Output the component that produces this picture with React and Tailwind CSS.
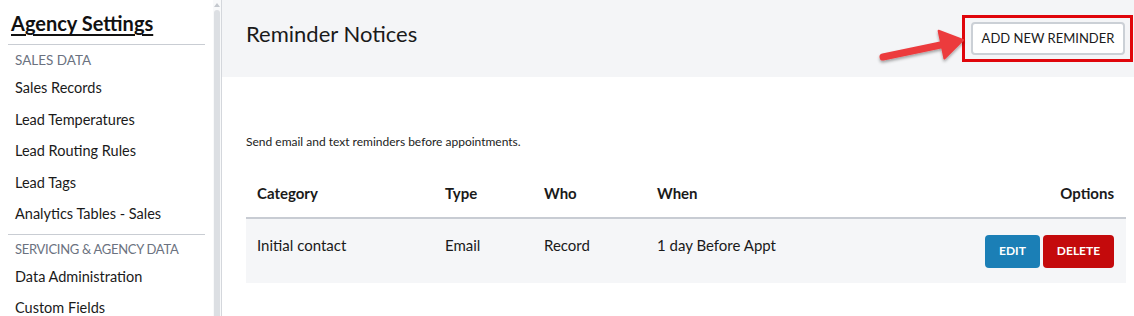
import React from 'react';

const salesItems = ['Sales Records', 'Lead Temperatures', 'Lead Routing Rules', 'Lead Tags', 'Analytics Tables - Sales'];
const serviceItems = ['Data Administration', 'Custom Fields'];

function Sidebar() {
  return (
    <aside className="w-[213px] shrink-0 overflow-hidden bg-white">
      <div className="px-[11px] pt-[10px] pb-[8px]">
        <h1 className="text-[20px] leading-[26px] font-bold underline underline-offset-[3px] decoration-[2px] text-[#111] whitespace-nowrap">
          Agency Settings
        </h1>
      </div>
      <div className="mx-[8px] border-t border-[#c9cdd3]" />
      <div className="px-[15px] pt-[3px]">
        <p className="text-[13.5px] leading-[24px] uppercase text-[#6b7280] whitespace-nowrap">Sales Data</p>
        {salesItems.map(i => (
          <p key={i} className="text-[14.5px] leading-[31.5px] text-[#1a1a1a] whitespace-nowrap">{i}</p>
        ))}
      </div>
      <div className="mx-[8px] mt-[4px] border-t border-[#c9cdd3]" />
      <div className="px-[15px] pt-[2px]">
        <p className="text-[13px] leading-[24px] tracking-[-0.3px] uppercase text-[#6b7280] whitespace-nowrap">Servicing &amp; Agency Data</p>
        {serviceItems.map(i => (
          <p key={i} className="text-[14.5px] leading-[31.5px] text-[#1a1a1a] whitespace-nowrap">{i}</p>
        ))}
      </div>
    </aside>
  );
}

function Scrollbar() {
  return (
    <div className="w-[9px] shrink-0 flex flex-col items-center bg-[#f8f9fa] border-r border-[#d4d7dc]">
      <div className="mt-[3px] w-0 h-0 border-l-[3px] border-r-[3px] border-b-[4px] border-l-transparent border-r-transparent border-b-[#c4c8ce]" />
      <div className="mt-[3px] w-[6px] flex-1 rounded-t-[3px] bg-[#dcdfe3]" />
    </div>
  );
}

function Arrow() {
  return (
    <svg className="absolute left-[870px] top-[22px]" width="100" height="50" viewBox="0 0 100 50">
      <defs>
        <filter id="sh" x="-20%" y="-20%" width="140%" height="160%">
          <feDropShadow dx="0" dy="2" stdDeviation="1.5" floodColor="#000" floodOpacity="0.35" />
        </filter>
      </defs>
      <g filter="url(#sh)" fill="#ec3b3e" stroke="#ec3b3e">
        <line x1="13" y1="35" x2="73" y2="22.5" strokeWidth="7" strokeLinecap="round" />
        <polygon points="93,18 74.4,36.5 68.6,8.8" strokeWidth="2" strokeLinejoin="round" />
      </g>
    </svg>
  );
}

export default function App() {
  return (
    <div className="relative flex h-[316px] w-[1134px] overflow-hidden bg-white font-['Lato',sans-serif] text-[#1a1a1a]">
      <Sidebar />
      <Scrollbar />
      <main className="flex-1 flex flex-col">
        <header className="h-[77px] bg-[#f4f5f7] flex items-start justify-between pl-[24px] pr-[1px]">
          <h2 className="mt-[20px] text-[22px] leading-[28px] text-[#1a1a1a]">Reminder Notices</h2>
          <div className="mt-[15px] border-[3px] border-[#e0060b] pt-[4px] pb-[4px] pl-[6px] pr-[5px]">
            <button className="h-[33px] w-[154px] rounded-[4px] border-2 border-[#cbd0d6] bg-white text-[13px] uppercase text-[#1a1a1a] whitespace-nowrap">
              Add New Reminder
            </button>
          </div>
        </header>

        <section className="pl-[24px] pr-[8px]">
          <p className="mt-[57px] text-[12px] leading-[16px] text-[#222]">
            Send email and text reminders before appointments.
          </p>

          <div className="mt-[19px] flex h-[50px] items-center border-b-2 border-[#c8ccd3] text-[15px] font-bold text-[#1a1a1a]">
            <div className="w-[199px] pl-[11px]">Category</div>
            <div className="w-[99px]">Type</div>
            <div className="w-[113px]">Who</div>
            <div className="flex-1">When</div>
            <div className="pr-[12px]">Options</div>
          </div>

          <div className="flex h-[64px] bg-[#f5f6f8] text-[15px] text-[#1a1a1a]">
            <div className="w-[199px] pl-[11px] pt-[15px]">Initial contact</div>
            <div className="w-[99px] pt-[15px]">Email</div>
            <div className="w-[113px] pt-[15px]">Record</div>
            <div className="flex-1 pt-[15px]">1 day Before Appt</div>
            <div className="flex items-center gap-[3px] pr-[12px]">
              <button className="h-[33px] w-[55px] rounded-[4px] bg-[#1b7fb6] text-[12px] font-bold uppercase text-white">Edit</button>
              <button className="h-[33px] w-[71px] rounded-[4px] bg-[#c40a0c] text-[12px] font-bold uppercase text-white">Delete</button>
            </div>
          </div>
        </section>
      </main>
      <Arrow />
    </div>
  );
}
